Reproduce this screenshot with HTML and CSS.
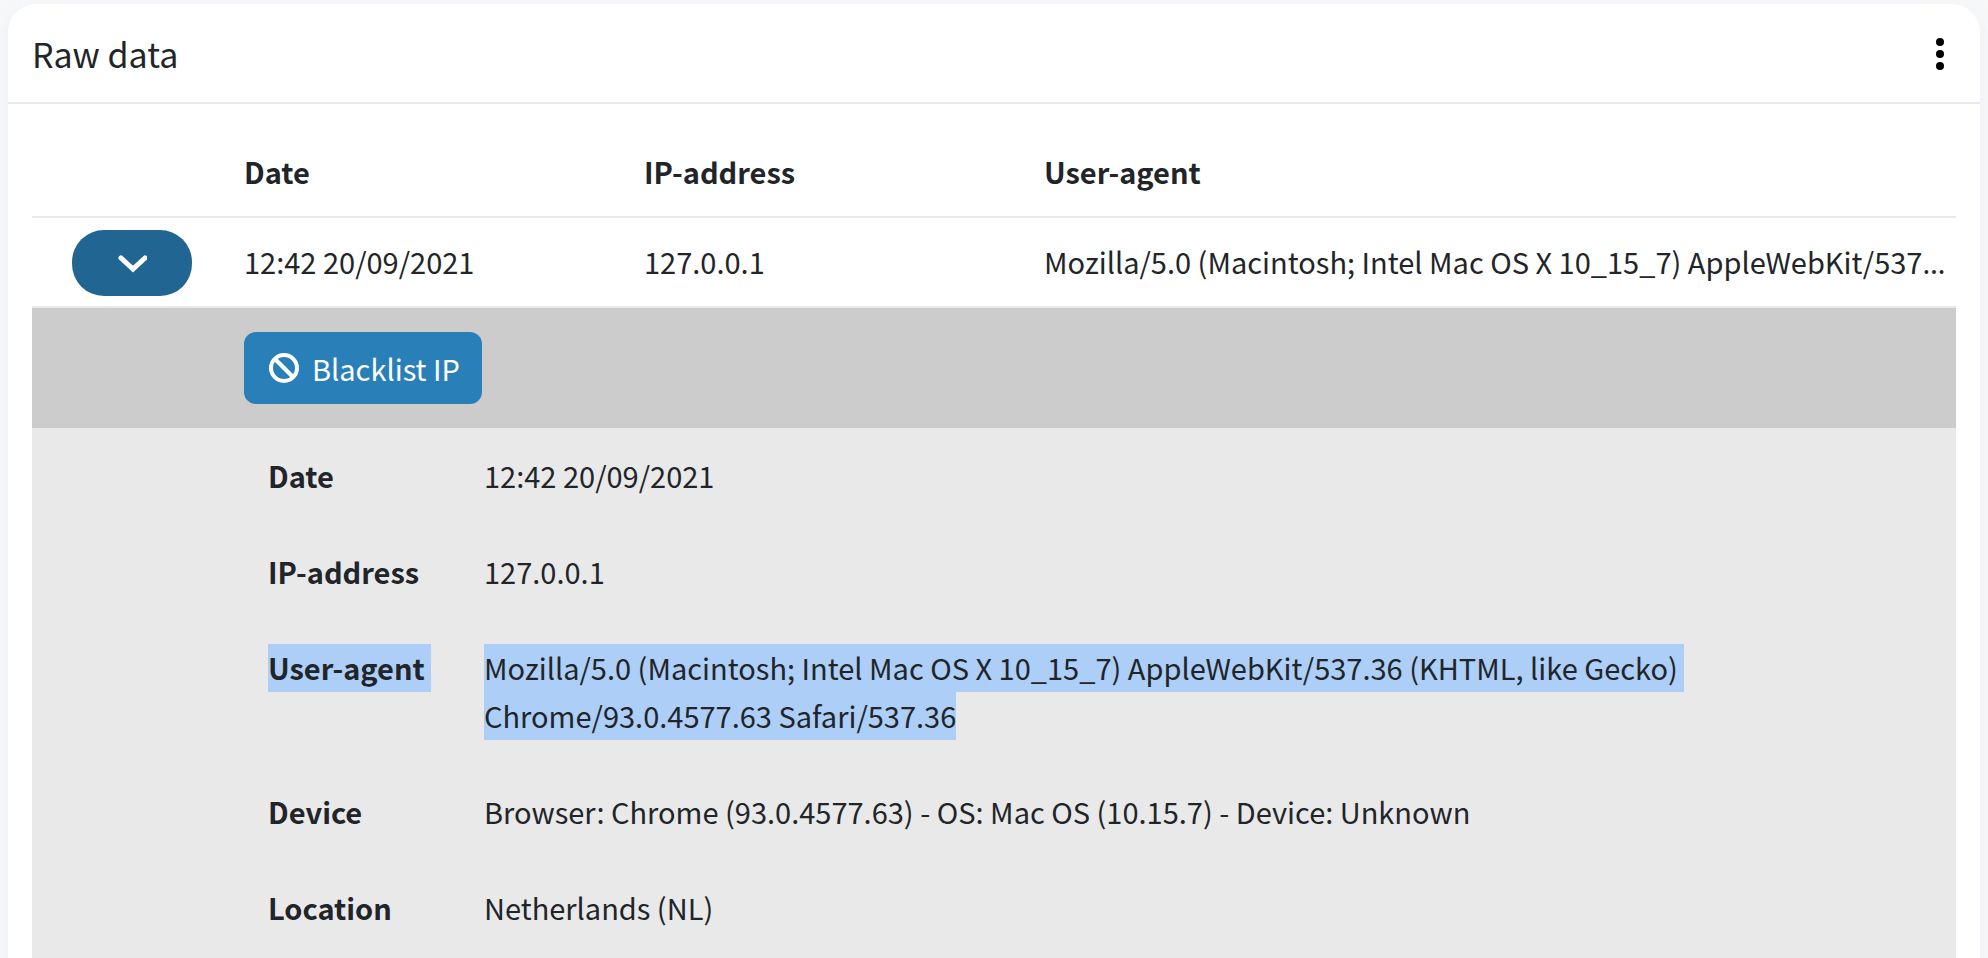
FILE: index.html
```html
<!DOCTYPE html>
<html lang="en">
<head>
<meta charset="utf-8">
<title>Raw data</title>
<link rel="stylesheet" href="styles.css">
</head>
<body>
<section class="card">
  <header class="card-header">
    <h1 class="card-title">Raw data</h1>
    <button class="menu-button" type="button" aria-label="Options">
      <svg width="8" height="32" viewBox="0 0 8 32" aria-hidden="true"><circle cx="4" cy="4" r="4"/><circle cx="4" cy="16" r="4"/><circle cx="4" cy="28" r="4"/></svg>
    </button>
  </header>
  <div class="card-body">
    <table class="log">
      <colgroup><col class="col-toggle"><col class="col-date"><col class="col-ip"><col></colgroup>
      <thead>
        <tr><th></th><th scope="col">Date</th><th scope="col">IP-address</th><th scope="col">User-agent</th></tr>
      </thead>
      <tbody>
        <tr>
          <td class="toggle-cell">
            <button class="toggle" type="button" aria-label="Hide details" aria-expanded="true">
              <svg width="30" height="22" viewBox="-1 -1 30 22" aria-hidden="true"><path d="M3 5l12 11L27 5" fill="none" stroke="#fff" stroke-width="5" stroke-linecap="round" stroke-linejoin="miter"/></svg>
            </button>
          </td>
          <td>12:42 20/09/2021</td>
          <td>127.0.0.1</td>
          <td class="agent-cell">Mozilla/5.0 (Macintosh; Intel Mac OS X 10_15_7) AppleWebKit/537<span class="ellipsis">…</span></td>
        </tr>
        <tr>
          <td class="detail-cell" colspan="4">
            <div class="actions">
              <button class="blacklist" type="button">
                <svg width="32" height="30" viewBox="-1 0 32 30" aria-hidden="true"><g fill="none" stroke="#fff" stroke-width="4"><circle cx="15" cy="15" r="13"/><path d="M6 6l18 18"/></g></svg>
                Blacklist IP
              </button>
            </div>
            <dl class="details">
              <div class="detail"><dt>Date</dt><dd>12:42 20/09/2021</dd></div>
              <div class="detail"><dt>IP-address</dt><dd>127.0.0.1</dd></div>
              <div class="detail"><dt><mark>User-agent&nbsp;</mark></dt><dd><mark>Mozilla/5.0 (Macintosh; Intel Mac OS X 10_15_7) AppleWebKit/537.36 (KHTML, like Gecko)&nbsp;<wbr>Chrome/93.0.4577.63 Safari/537.36</mark></dd></div>
              <div class="detail"><dt>Device</dt><dd>Browser: Chrome (93.0.4577.63) - OS: Mac OS (10.15.7) - Device: Unknown</dd></div>
              <div class="detail"><dt>Location</dt><dd>Netherlands (NL)</dd></div>
            </dl>
          </td>
        </tr>
      </tbody>
    </table>
  </div>
</section>
</body>
</html>
```
FILE: styles.css
```css
* { box-sizing: border-box; }

body {
  height: 100vh;
  margin: 0;
  padding: 4px 8px 0;
  overflow: hidden;
  background: #f8f8f8;
  color: #212529;
  font: 29px/48px "Noto Sans CJK SC", "Noto Sans", sans-serif;
}

button {
  border: 0;
  font: inherit;
  cursor: pointer;
}

.card {
  border-radius: 28px;
  background: #fff;
  box-shadow: 0 0 24px rgba(238, 244, 252, 0.7), 0 8px 16px rgba(0, 0, 0, 0.04);
}

.card-header {
  display: flex;
  align-items: center;
  justify-content: space-between;
  height: 100px;
  padding: 2px 24px 0;
  border-bottom: 2px solid #e9e9e9;
}

.card-title {
  margin: 0;
  font-size: 34px;
  font-weight: 400;
}

.menu-button {
  display: flex;
  padding: 0 12px;
  background: none;
}

.card-body { padding: 24px 24px 0; }

.log {
  width: 100%;
  table-layout: fixed;
  border-collapse: separate;
  border-spacing: 0;
}

.col-toggle { width: 200px; }
.col-date, .col-ip { width: 400px; }

.log th,
.log td {
  padding: 19px 12px 21px;
  border-bottom: 2px solid #e9e9e9;
  text-align: left;
  white-space: nowrap;
}

.log .agent-cell { padding-right: 0; }

.ellipsis { font-family: "Noto Sans", sans-serif; line-height: 1; }

.log .toggle-cell {
  padding: 12px 0 10px;
}

.toggle {
  display: flex;
  align-items: center;
  justify-content: center;
  width: 120px;
  height: 66px;
  margin: 0 auto;
  border-radius: 32px;
  background: #216592;
}

.log .detail-cell {
  padding: 0;
  border: 0;
  background: #e9e9e9;
  white-space: normal;
}

.actions {
  padding: 24px 212px;
  background: #ccc;
}

.blacklist {
  display: flex;
  align-items: center;
  gap: 12px;
  height: 72px;
  padding: 0 22px 0 24px;
  border-radius: 12px;
  background: #2980b9;
  color: #fff;
}

.details {
  margin: 0;
  padding: 0 24px 48px 236px;
}

.detail {
  display: grid;
  grid-template-columns: 216px 1fr;
  padding: 23px 0 25px;
}

dt { font-weight: 700; }
dd { margin: 0; }

mark {
  padding: 2px 0 4px;
  background: #accef7;
  color: inherit;
}
```
